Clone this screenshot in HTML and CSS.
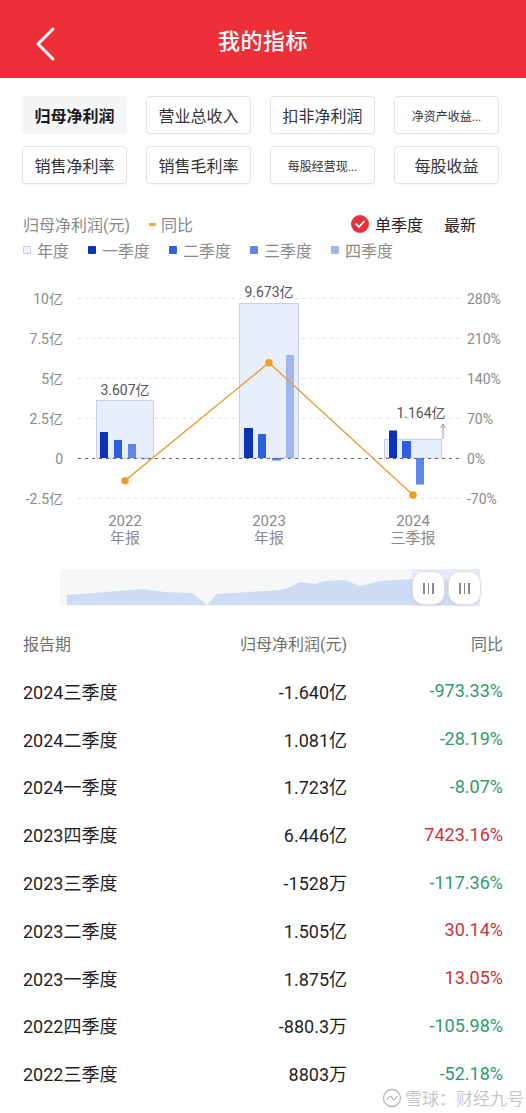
FILE: index.html
```html
<!DOCTYPE html>
<html lang="zh-CN">
<head>
<meta charset="utf-8">
<title>我的指标</title>
<link rel="stylesheet" href="styles.css">
</head>
<body>
<div class="page">
  <header class="topbar">
    <svg class="back" width="24" height="36" viewBox="0 0 24 36">
      <polyline points="18,3 3,18 18,33" fill="none" stroke="#fff" stroke-width="3" stroke-linecap="round" stroke-linejoin="round"/>
    </svg>
    <h1 class="title">我的指标</h1>
  </header>

  <div class="tabs">
    <div class="tab active">归母净利润</div>
    <div class="tab">营业总收入</div>
    <div class="tab">扣非净利润</div>
    <div class="tab small">净资产收益...</div>
    <div class="tab">销售净利率</div>
    <div class="tab">销售毛利率</div>
    <div class="tab small">每股经营现...</div>
    <div class="tab">每股收益</div>
  </div>

  <div class="legend">
    <div class="legend-row">
      <span class="lg-gray">归母净利润(元)</span>
      <span class="yoy"><i class="dash"></i>同比</span>
      <div class="legend-right">
        <svg class="check" width="18" height="18" viewBox="0 0 18 18">
          <circle cx="9" cy="9" r="9" fill="#e3323b"/>
          <polyline points="5,9.2 8,12 13,6.5" fill="none" stroke="#fff" stroke-width="1.8" stroke-linecap="round" stroke-linejoin="round"/>
        </svg>
        <span class="lg-dark">单季度</span>
        <span class="lg-dark newest">最新</span>
      </div>
    </div>
    <div class="legend-row row2">
      <span class="lg-item"><i class="sq sq-year"></i>年度</span>
      <span class="lg-item"><i class="sq sq-q1"></i>一季度</span>
      <span class="lg-item"><i class="sq sq-q2"></i>二季度</span>
      <span class="lg-item"><i class="sq sq-q3"></i>三季度</span>
      <span class="lg-item"><i class="sq sq-q4"></i>四季度</span>
    </div>
  </div>

  <svg class="chart" width="526" height="297" viewBox="0 0 526 297">
    <g stroke="#e2e2e2" stroke-width="1" stroke-dasharray="3 4">
      <line x1="78" y1="35.5" x2="460" y2="35.5"/>
      <line x1="78" y1="75.5" x2="460" y2="75.5"/>
      <line x1="78" y1="115.5" x2="460" y2="115.5"/>
      <line x1="78" y1="155.5" x2="460" y2="155.5"/>
      <line x1="78" y1="235.5" x2="460" y2="235.5"/>
    </g>
    <g class="axis-l" font-size="14" fill="#8a8a8a" text-anchor="end">
      <text x="63" y="40.5">10亿</text>
      <text x="63" y="80.5">7.5亿</text>
      <text x="63" y="120.5">5亿</text>
      <text x="63" y="160.5">2.5亿</text>
      <text x="63" y="200.5">0</text>
      <text x="63" y="240.5">-2.5亿</text>
    </g>
    <g class="axis-r" font-size="14" fill="#8a8a8a">
      <text x="467" y="40.5">280%</text>
      <text x="467" y="80.5">210%</text>
      <text x="467" y="120.5">140%</text>
      <text x="467" y="160.5">70%</text>
      <text x="467" y="200.5">0%</text>
      <text x="467" y="240.5">-70%</text>
    </g>

    <g fill="#e8eefc" stroke="#c3d0ee" stroke-width="1">
      <rect x="96.5" y="137.5" width="57" height="57.5"/>
      <rect x="239.5" y="40.5" width="59" height="154.5"/>
      <rect x="384.5" y="176.5" width="57" height="18.5"/>
    </g>
    <line x1="443" y1="176" x2="443" y2="162" stroke="#9a9a9a" stroke-width="1"/>
    <polyline points="440.5,165 443,161 445.5,165" fill="none" stroke="#9a9a9a" stroke-width="1"/>

    <rect x="100" y="169" width="8" height="26" fill="#0b33b8"/>
    <rect x="114" y="177" width="8" height="18" fill="#2f60e3"/>
    <rect x="128" y="181" width="8" height="14" fill="#5d87ea"/>
    <rect x="142" y="195" width="8" height="1.5" fill="#9fb6f0"/>
    <rect x="244" y="165" width="9" height="30" fill="#0b33b8"/>
    <rect x="258" y="171" width="8" height="24" fill="#2f60e3"/>
    <rect x="272" y="195" width="9" height="2.5" fill="#5d87ea"/>
    <rect x="286" y="92" width="8" height="103" fill="#9fb6f0"/>
    <rect x="389" y="167.5" width="8" height="27.5" fill="#0b33b8"/>
    <rect x="402" y="178" width="9" height="17" fill="#2f60e3"/>
    <rect x="416" y="195" width="8" height="26.5" fill="#5d87ea"/>

    <line x1="78" y1="195.5" x2="460" y2="195.5" stroke="#666" stroke-width="1" stroke-dasharray="3 4"/>

    <g font-size="14" fill="#555" text-anchor="middle">
      <text x="125" y="132">3.607亿</text>
      <text x="269" y="34">9.673亿</text>
      <text x="421" y="155">1.164亿</text>
    </g>

    <polyline points="125,217.7 269,99.7 413,232" fill="none" stroke="#e6a23c" stroke-width="1.5"/>
    <g fill="#f0a021">
      <circle cx="125" cy="217.7" r="3.8"/>
      <circle cx="269" cy="99.7" r="3.8"/>
      <circle cx="413" cy="232" r="3.8"/>
    </g>

    <g font-size="15" fill="#8a8a8a" text-anchor="middle">
      <text x="125" y="263">2022</text>
      <text x="125" y="280">年报</text>
      <text x="269" y="263">2023</text>
      <text x="269" y="280">年报</text>
      <text x="413" y="263">2024</text>
      <text x="413" y="280">三季报</text>
    </g>
  </svg>

  <div class="slider">
    <svg class="slider-area" width="420" height="37" viewBox="0 0 420 37">
      <rect x="352" y="0" width="68" height="37" fill="#e6ecfa"/>
      <polygon points="7,26 83,20 105,23 132,24 147,36 157,25 220,21 230,18 240,13 255,15 265,12 285,11 300,17 320,12 352,10 360,10 400,10 410,12 410,36 7,36" fill="#cfdcf6"/>
    </svg>
    <div class="handle h1"><i></i><i></i><i></i></div>
    <div class="handle h2"><i></i><i></i><i></i></div>
  </div>

  <div class="table">
    <div class="row head">
      <span>报告期</span><span class="num">归母净利润(元)</span><span class="num">同比</span>
    </div>
    <div class="row"><span>2024三季度</span><span class="num">-1.640亿</span><span class="num down">-973.33%</span></div>
    <div class="row"><span>2024二季度</span><span class="num">1.081亿</span><span class="num down">-28.19%</span></div>
    <div class="row"><span>2024一季度</span><span class="num">1.723亿</span><span class="num down">-8.07%</span></div>
    <div class="row"><span>2023四季度</span><span class="num">6.446亿</span><span class="num up">7423.16%</span></div>
    <div class="row"><span>2023三季度</span><span class="num">-1528万</span><span class="num down">-117.36%</span></div>
    <div class="row"><span>2023二季度</span><span class="num">1.505亿</span><span class="num up">30.14%</span></div>
    <div class="row"><span>2023一季度</span><span class="num">1.875亿</span><span class="num up">13.05%</span></div>
    <div class="row"><span>2022四季度</span><span class="num">-880.3万</span><span class="num down">-105.98%</span></div>
    <div class="row"><span>2022三季度</span><span class="num">8803万</span><span class="num down">-52.18%</span></div>
  </div>

  <div class="watermark">
    <svg width="20" height="20" viewBox="0 0 20 20">
      <circle cx="10" cy="10" r="8.5" fill="none" stroke="#b9b9b9" stroke-width="1.3"/>
      <path d="M5 12 Q8 6 10 10 Q12 14 15 8" fill="none" stroke="#b9b9b9" stroke-width="1.3"/>
    </svg>
    <span>雪球：财经九号</span>
  </div>
</div>
</body>
</html>
```

FILE: styles.css
```css
* { box-sizing: border-box; }
html, body { margin: 0; padding: 0; background: #fff; }
body {
  font-family: Roboto, "Noto Sans CJK SC", "Noto Sans", sans-serif;
  color: #222;
}
.page {
  position: relative;
  width: 526px;
  height: 1113px;
  overflow: hidden;
}
.topbar {
  position: relative;
  height: 78px;
  background: #ee2f38;
  display: flex;
  align-items: center;
  justify-content: center;
}
.back {
  position: absolute;
  left: 35px;
  top: 26px;
}
.title {
  margin: 0;
  font-size: 22px;
  font-weight: 500;
  color: #fff;
  letter-spacing: 0.5px;
}
.tabs {
  display: grid;
  grid-template-columns: repeat(4, 105px);
  column-gap: 19px;
  row-gap: 12px;
  padding: 18px 22px 0;
}
.tab {
  height: 38px;
  border: 1px solid #e3e3e3;
  border-radius: 4px;
  display: flex;
  align-items: center;
  justify-content: center;
  font-size: 16px;
  color: #333;
  background: #fff;
  box-shadow: 0 1px 2px rgba(0,0,0,0.04);
}
.tab.small { font-size: 12px; }
.tab.active {
  border-color: #f4f5f7;
  background: #f4f5f7;
  color: #1a1a1a;
  font-weight: 600;
  box-shadow: none;
}
.legend {
  padding: 28px 23px 0;
}
.legend-row {
  display: flex;
  align-items: center;
  height: 24px;
  font-size: 16px;
}
.legend-row.row2 {
  height: 26px;
  padding-top: 2px;
}
.lg-gray { color: #8a8a8a; }
.yoy {
  display: inline-flex;
  align-items: center;
  color: #8a8a8a;
  margin-left: 19px;
}
.dash {
  display: inline-block;
  width: 7px;
  height: 3px;
  background: #eaa93f;
  border-radius: 1px;
  margin-right: 5px;
}
.legend-right {
  margin-left: auto;
  margin-right: 27px;
  display: flex;
  align-items: center;
}
.check { margin-right: 6px; }
.lg-dark { color: #222; }
.newest { margin-left: 21px; }
.lg-item {
  display: inline-flex;
  align-items: center;
  color: #8a8a8a;
  margin-right: 19px;
}
.sq {
  display: inline-block;
  width: 8px;
  height: 8px;
  border-radius: 1px;
  margin-right: 6px;
}
.sq-year { background: #eef2fb; border: 1px solid #c9cfdc; }
.sq-q1 { background: #0b33b8; }
.sq-q2 { background: #2f60e3; }
.sq-q3 { background: #5d87ea; }
.sq-q4 { background: #9fb6f0; }
.chart {
  display: block;
  margin-top: 1px;
  font-family: Roboto, "Noto Sans CJK SC", sans-serif;
}
.slider {
  position: relative;
  margin: 9px 0 0 60px;
  width: 420px;
  height: 37px;
  background: #f6f7f9;
  border-radius: 4px;
}
.slider-area { display: block; }
.handle {
  position: absolute;
  top: 2px;
  width: 33px;
  height: 34px;
  background: #fff;
  border: 1px solid #e0e0e0;
  border-radius: 12px;
  box-shadow: 0 1px 3px rgba(0,0,0,0.08);
  display: flex;
  align-items: center;
  justify-content: center;
  gap: 3px;
}
.handle i {
  display: block;
  width: 1.5px;
  height: 11px;
  background: #8a8a8a;
}
.h1 { left: 352px; }
.h2 { left: 388px; }
.table {
  margin-top: 13px;
  padding: 0 23px;
}
.row {
  display: grid;
  grid-template-columns: 1fr 160px 156px;
  align-items: center;
  height: 47.8px;
  font-size: 18px;
  color: #1f1f1f;
}
.row.head {
  font-size: 16px;
  color: #6f6f6f;
  height: 48px;
}
.num { text-align: right; }
.down { color: #2f9c6b; }
.up { color: #c8353b; }
.watermark {
  position: absolute;
  left: 382px;
  top: 1085px;
  display: flex;
  align-items: center;
  gap: 3px;
  font-size: 17px;
  color: rgba(150,150,150,0.55);
  background: rgba(255,255,255,0.6);
}
```
